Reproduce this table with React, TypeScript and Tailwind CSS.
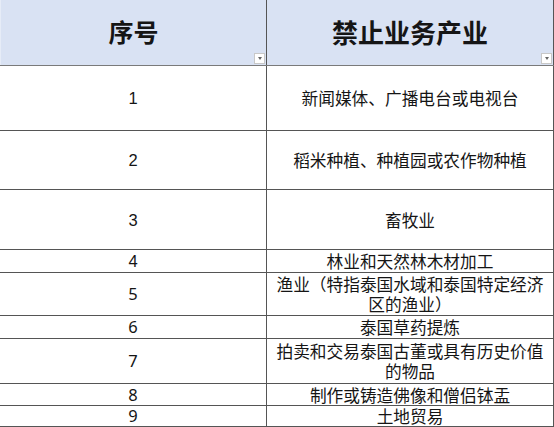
import React from "react";

type Row = { n: string; lines: string[]; h: string; numFont: string };

const rows: Row[] = [
  { n: "1", lines: ["新闻媒体、广播电台或电视台"], h: "h-[65px]", numFont: "font-['Liberation_Sans',sans-serif]" },
  { n: "2", lines: ["稻米种植、种植园或农作物种植"], h: "h-[59px]", numFont: "font-['Liberation_Sans',sans-serif]" },
  { n: "3", lines: ["畜牧业"], h: "h-[60px]", numFont: "font-['Liberation_Sans',sans-serif]" },
  { n: "4", lines: ["林业和天然林木材加工"], h: "h-[23px]", numFont: "font-['Liberation_Sans',sans-serif]" },
  { n: "5", lines: ["渔业（特指泰国水域和泰国特定经济", "区的渔业）"], h: "h-[43px]", numFont: "font-['Noto_Sans',sans-serif]" },
  { n: "6", lines: ["泰国草药提炼"], h: "h-[23px]", numFont: "font-['Noto_Sans',sans-serif]" },
  { n: "7", lines: ["拍卖和交易泰国古董或具有历史价值", "的物品"], h: "h-[45px]", numFont: "font-['Noto_Sans',sans-serif]" },
  { n: "8", lines: ["制作或铸造佛像和僧侣钵盂"], h: "h-[22px]", numFont: "font-['Noto_Sans',sans-serif]" },
  { n: "9", lines: ["土地贸易"], h: "h-[21px]", numFont: "font-['Noto_Sans',sans-serif]" },
];

function Drop() {
  return (
    <div className="absolute right-[1px] bottom-[1px] w-[11px] h-[11px] bg-white border border-[#c8c8c8] flex items-center justify-center">
      <div className="w-0 h-0 border-l-[2.5px] border-r-[2.5px] border-t-[3px] border-l-transparent border-r-transparent border-t-[#666]" />
    </div>
  );
}

export default function App() {
  return (
    <div className="w-[554px] h-[427px] bg-white text-[#151515] font-['Noto_Sans_CJK_SC',sans-serif] overflow-hidden">
      <div className="flex h-[66px] bg-[#d9e2f3] border-b border-[#7a7a7a]">
        <div className="relative w-[267px] border-r border-[#555] border-l border-l-[#e6ecf7] flex items-center justify-center text-[25px] font-bold pb-[2px]">
          序号
          <Drop />
        </div>
        <div className="relative w-[287px] border-r border-[#555] flex items-center justify-center text-[26px] font-bold pb-[2px]">
          禁止业务产业
          <Drop />
        </div>
      </div>
      {rows.map((r) => (
        <div key={r.n} className={`flex ${r.h} border-b border-[#555] overflow-hidden`}>
          <div className={`w-[267px] border-r border-[#555] flex items-center justify-center text-[16.5px] leading-[20px] ${r.numFont}`}>
            {r.n}
          </div>
          <div className="w-[287px] border-r border-[#555] flex flex-col items-center justify-center text-[16.7px] leading-[20px]">
            {r.lines.map((l, i) => (
              <div key={i} className="whitespace-nowrap h-[20px]">{l}</div>
            ))}
          </div>
        </div>
      ))}
    </div>
  );
}
